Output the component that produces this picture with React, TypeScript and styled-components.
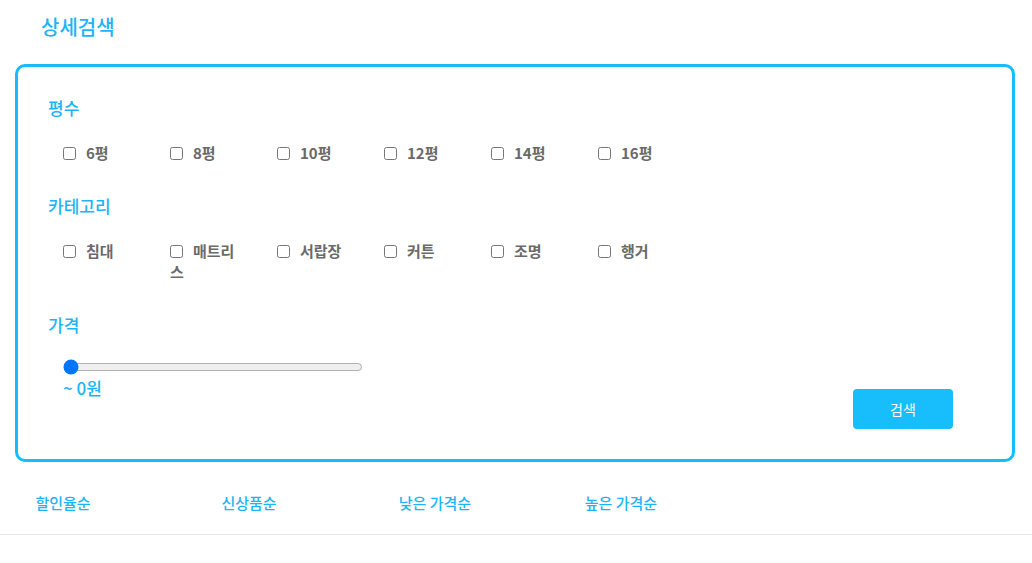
import React from "react";
import styled, { createGlobalStyle } from "styled-components";

const BLUE = "#1cb4f6";
const BORDER = "#17bdfa";

const Global = createGlobalStyle`
  body {
    margin: 0;
    background: #ffffff;
    font-family: "Noto Sans CJK KR", "Noto Sans", sans-serif;
  }
`;

const Page = styled.div`
  width: 1032px;
`;

const Title = styled.h2`
  margin: 0;
  padding: 12px 0 0 41px;
  font-size: 20px;
  line-height: 30px;
  font-weight: 500;
  color: ${BLUE};
`;

const Panel = styled.section`
  box-sizing: border-box;
  width: 1000px;
  margin: 22px 0 0 15px;
  border: 3px solid ${BORDER};
  border-radius: 10px;
  padding: 31px 30px 30px 30px;
`;

const SectionLabel = styled.h3<{ $gap?: number }>`
  margin: ${(p) => p.$gap ?? 0}px 0 0 0;
  font-size: 17px;
  line-height: 20px;
  font-weight: 500;
  color: ${BLUE};
`;

const Options = styled.div`
  display: flex;
  flex-wrap: wrap;
  gap: 0 37px;
  margin: 24px 0 0 15px;
`;

const Option = styled.label`
  display: block;
  width: 70px;
  font-size: 15px;
  line-height: 21px;
  font-weight: 700;
  color: #6a6a6a;
`;

const Box = styled.input`
  width: 13px;
  height: 13px;
  margin: 0 10px 0 0;
  vertical-align: -1px;
`;

const PriceRow = styled.div`
  display: flex;
  justify-content: space-between;
  align-items: flex-start;
  margin-top: 24px;
`;

const PriceCol = styled.div`
  display: flex;
  flex-direction: column;
  padding-left: 15px;
`;

const Range = styled.input`
  width: 300px;
  margin: 0;
`;

const PriceValue = styled.div`
  margin-top: 3px;
  font-size: 17px;
  line-height: 20px;
  font-weight: 500;
  color: ${BLUE};
`;

const SearchButton = styled.button`
  width: 100px;
  height: 40px;
  margin: 30px 29px 0 0;
  border: none;
  border-radius: 4px;
  background: #18bdfc;
  color: #ffffff;
  font-family: "Noto Sans CJK KR", "Noto Sans", sans-serif;
  font-size: 14px;
  cursor: pointer;
`;

const SortBar = styled.nav`
  display: grid;
  grid-template-columns: repeat(4, 126px);
  column-gap: 60px;
  padding: 31px 0 21px 0;
  border-bottom: 1px solid #e8eaec;
`;

const SortItem = styled.a`
  text-align: center;
  font-size: 15px;
  line-height: 20px;
  font-weight: 500;
  color: ${BLUE};
  text-decoration: none;
  cursor: pointer;
`;

const sizes = ["6평", "8평", "10평", "12평", "14평", "16평"];
const categories = ["침대", "매트리스", "서랍장", "커튼", "조명", "행거"];
const sorts = ["할인율순", "신상품순", "낮은 가격순", "높은 가격순"];

export default function App() {
  const [price, setPrice] = React.useState(0);
  return (
    <Page>
      <Global />
      <Title>상세검색</Title>
      <Panel>
        <SectionLabel>평수</SectionLabel>
        <Options>
          {sizes.map((s) => (
            <Option key={s}>
              <Box type="checkbox" />
              {s}
            </Option>
          ))}
        </Options>
        <SectionLabel $gap={33}>카테고리</SectionLabel>
        <Options>
          {categories.map((s) => (
            <Option key={s}>
              <Box type="checkbox" />
              {s}
            </Option>
          ))}
        </Options>
        <SectionLabel $gap={33}>가격</SectionLabel>
        <PriceRow>
          <PriceCol>
            <Range
              type="range"
              min={0}
              max={1000000}
              step={10000}
              value={price}
              onChange={(e) => setPrice(Number(e.target.value))}
            />
            <PriceValue>~ {price.toLocaleString()}원</PriceValue>
          </PriceCol>
          <SearchButton>검색</SearchButton>
        </PriceRow>
      </Panel>
      <SortBar>
        {sorts.map((s) => (
          <SortItem key={s}>{s}</SortItem>
        ))}
      </SortBar>
    </Page>
  );
}
